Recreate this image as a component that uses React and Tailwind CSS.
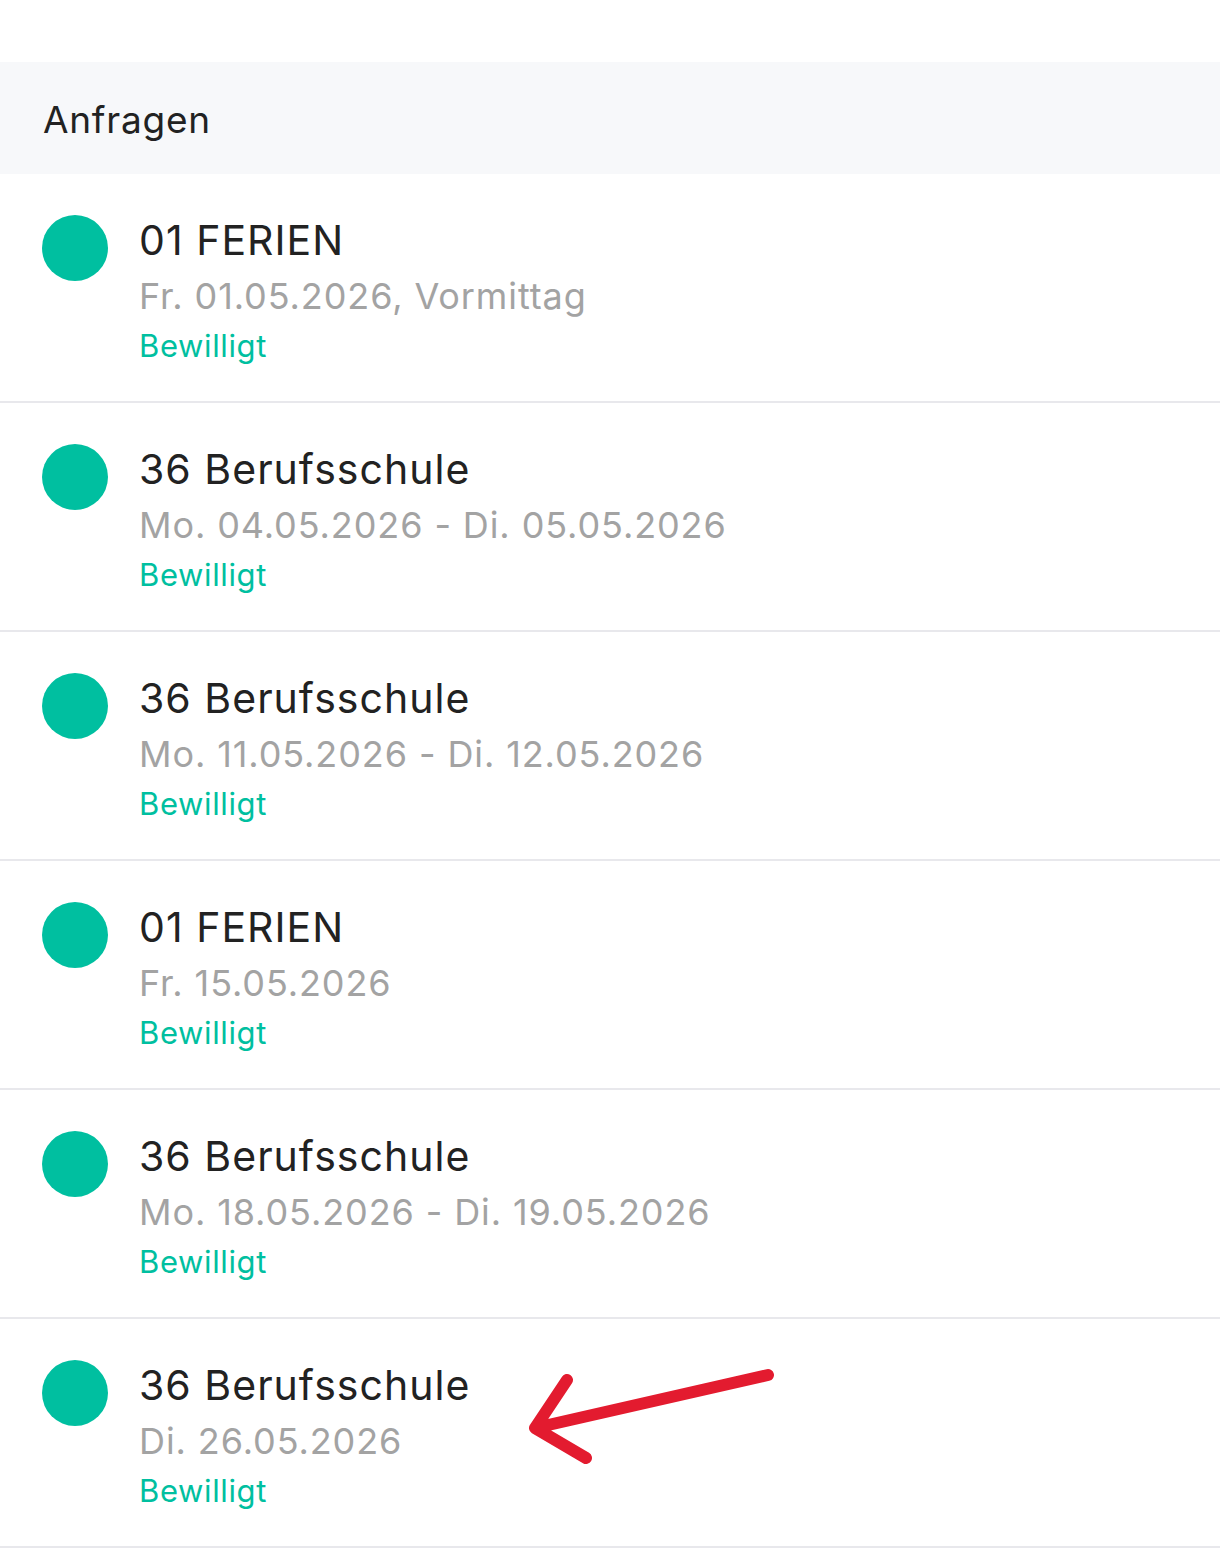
import React from 'react'

const items = [
  { title: '01 FERIEN', date: 'Fr. 01.05.2026, Vormittag' },
  { title: '36 Berufsschule', date: 'Mo. 04.05.2026 - Di. 05.05.2026' },
  { title: '36 Berufsschule', date: 'Mo. 11.05.2026 - Di. 12.05.2026' },
  { title: '01 FERIEN', date: 'Fr. 15.05.2026' },
  { title: '36 Berufsschule', date: 'Mo. 18.05.2026 - Di. 19.05.2026' },
  { title: '36 Berufsschule', date: 'Di. 26.05.2026', arrow: true },
]

const Arrow = () => (
  <svg className="absolute left-[520px] top-[41px]" width="280" height="120" viewBox="520 1360 280 120" fill="none">
    <path
      d="M768 1375 L535 1428 M567 1380 L535 1428 L586 1458"
      stroke="#e31b2f"
      strokeWidth="12"
      strokeLinecap="round"
      strokeLinejoin="round"
    />
  </svg>
)

const RequestRow = ({ item }) => (
  <div className="relative flex border-b-2 border-[#e8e8ec] pl-[42px] pt-[38px] pb-[33px]">
    {/* status dot */}
    <div className="mt-[3px] h-[66px] w-[66px] shrink-0 rounded-full bg-[#00bfa0]" />
    <div className="ml-[31px] flex flex-col">
      <span className="text-[41px] leading-[56px] tracking-[0.025em] text-[#222]">{item.title}</span>
      <span className="text-[36px] leading-[56px] tracking-[0.025em] text-[#a3a3a3]">{item.date}</span>
      <span className="text-[31px] leading-[44px] tracking-[0.02em] text-[#00bfa0]">Bewilligt</span>
    </div>
    {item.arrow && <Arrow />}
  </div>
)

export default function App() {
  return (
    <div className="min-h-[1553px] bg-white" style={{ fontFamily: 'Inter, "Noto Sans", sans-serif' }}>
      <div className="h-[62px]" />
      <div className="flex h-[112px] items-center bg-[#f7f8fa] pl-[43px] pt-[3px]">
        <span className="text-[37px] tracking-[0.02em] text-[#222]">Anfragen</span>
      </div>
      {items.map((item, i) => (
        <RequestRow key={i} item={item} />
      ))}
    </div>
  )
}
